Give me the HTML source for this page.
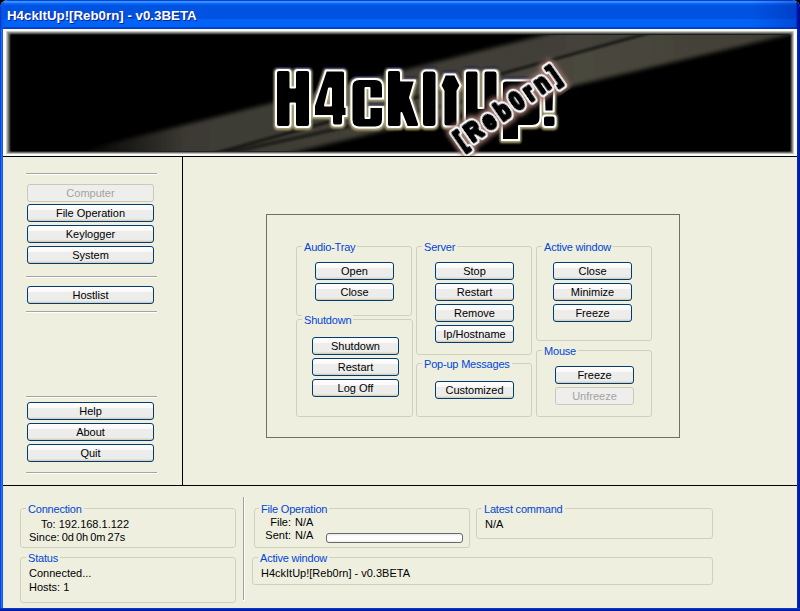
<!DOCTYPE html>
<html><head><meta charset="utf-8"><style>
*{box-sizing:border-box;margin:0;padding:0}
html,body{width:800px;height:611px;overflow:hidden;background:#000}
body{position:relative;font-family:"Liberation Sans",sans-serif;font-size:11px;color:#000}
#win{position:absolute;left:0;top:0;width:800px;height:611px;background:#efefe0;border-radius:8px 8px 0 0;overflow:hidden}
#title{position:absolute;left:0;top:0;width:800px;height:29px;background:linear-gradient(to bottom,#0a3fd0 0px,#0a3fd0 1px,#3d95ff 1px,#2a8aff 3px,#0a6bff 3px,#0060f8 5px,#0053e1 5px,#0053e1 19px,#0062f6 19px,#0062f6 27px,#0049e0 27px,#0038c8 29px)}
#ttext{position:absolute;left:7px;top:8px;font-weight:bold;font-size:13.3px;color:#fff;text-shadow:1px 1px 0 #0a1e8a;white-space:nowrap}
#lb{position:absolute;left:0;top:29px;width:3px;height:582px;background:linear-gradient(to right,#0a2ae0,#2070f0,#0a50e8)}
#rb{position:absolute;left:797px;top:29px;width:3px;height:582px;background:linear-gradient(to right,#0030d0,#0020b0,#001890)}
#bb{position:absolute;left:0;top:608px;width:800px;height:3px;background:linear-gradient(to bottom,#0a40e0,#0022b0,#001890)}
#banner{position:absolute;left:3px;top:29px;width:794px;height:127px;background:#fffcf5}
#bin{position:absolute;left:8px;top:6px;width:779px;height:116px;background:#000;overflow:hidden}
.hl{position:absolute;background:#000}
.sep{position:absolute;left:26px;width:131px;height:2px;border-top:1px solid #a6a5a0;border-bottom:1px solid #fff}
.btn{position:absolute;border:1px solid #003c74;border-radius:3px;background:linear-gradient(to bottom,#fffefe 0px,#fdf8f7 5px,#ededec 5px,#ececeb 14px,#e4e1d4 14px,#e4e1d4 15px,#d6d0bd 15px,#d6d0bd 16px);text-align:center;line-height:15px;padding-top:1px;white-space:nowrap;color:#000}
.btn.dis{border-color:#cac8bb;background:#eeeeec;color:#a2a2a2}
.gb{position:absolute;border:1px solid #d0d0bc;border-radius:3px}
.gl{position:absolute;background:#efefe0;color:#0046d5;padding:0 2px;line-height:13px;white-space:nowrap;letter-spacing:-0.2px}
.t{position:absolute;line-height:13px;white-space:nowrap}
.frame{position:absolute;border:1px solid #716f64}

.prog{position:absolute;border:1px solid #686868;border-radius:3px;background:linear-gradient(to bottom,#e8e8e8,#fff 30%,#fff 70%,#f0f0f0)}
</style></head><body>
<div id="win">
<div id="title"><div style="position:absolute;left:0;top:0;width:800px;height:29px;background:linear-gradient(to right,#0030c8 0px,#0a56e6 2px,rgba(0,80,230,0) 5px,rgba(0,80,230,0) 750px,rgba(0,30,160,0.35) 796px,#0018a8 797px,#000a90 800px)"></div><div id="ttext">H4ckItUp![Reb0rn] - v0.3BETA</div></div>
<div id="banner"><div id="bin"></div></div>
<svg id="bsvg" width="800" height="157" viewBox="0 0 800 157" style="position:absolute;left:0;top:0">
<defs>
<clipPath id="bc"><rect x="11" y="35" width="779" height="116"/></clipPath>
<linearGradient id="gl" x1="6" x2="11" y1="0" y2="0" gradientUnits="userSpaceOnUse"><stop offset="0" stop-color="#e0e2de"/><stop offset="1" stop-color="#000"/></linearGradient>
<linearGradient id="gr" x1="794" x2="790" y1="0" y2="0" gradientUnits="userSpaceOnUse"><stop offset="0" stop-color="#e0e2de"/><stop offset="1" stop-color="#000"/></linearGradient>
<linearGradient id="gt" x1="0" x2="0" y1="31" y2="35" gradientUnits="userSpaceOnUse"><stop offset="0" stop-color="#e0e2de"/><stop offset="1" stop-color="#000"/></linearGradient>
<linearGradient id="gb" x1="0" x2="0" y1="154" y2="151" gradientUnits="userSpaceOnUse"><stop offset="0" stop-color="#e0e2de"/><stop offset="1" stop-color="#000"/></linearGradient>
<linearGradient id="beamA" x1="80" x2="800" y1="0" y2="0" gradientUnits="userSpaceOnUse"><stop offset="0" stop-color="#44423a" stop-opacity="0"/><stop offset="0.15" stop-color="#44423a" stop-opacity="0.9"/><stop offset="0.8" stop-color="#44423a" stop-opacity="1"/><stop offset="1" stop-color="#44423a" stop-opacity="0.9"/></linearGradient>
<linearGradient id="beamB" x1="80" x2="800" y1="0" y2="0" gradientUnits="userSpaceOnUse"><stop offset="0" stop-color="#4a483e" stop-opacity="0"/><stop offset="0.12" stop-color="#4a483e" stop-opacity="0.8"/><stop offset="0.7" stop-color="#4a483e" stop-opacity="1"/><stop offset="1" stop-color="#4a483e" stop-opacity="0.85"/></linearGradient>
<filter id="blur6" x="-20%" y="-50%" width="140%" height="200%"><feGaussianBlur stdDeviation="2"/></filter>
<filter id="blur2" x="-20%" y="-50%" width="140%" height="200%"><feGaussianBlur stdDeviation="1.2"/></filter>
<filter id="glowY" x="-10%" y="-20%" width="120%" height="140%">
<feMorphology operator="dilate" radius="0.8" in="SourceAlpha" result="d"/>
<feGaussianBlur in="d" stdDeviation="0.8" result="b"/>
<feOffset in="b" dy="1.2" result="bo"/>
<feFlood flood-color="#b0a878"/><feComposite in2="bo" operator="in" result="g"/>
<feOffset in="b" dy="-1.5" result="bn"/>
<feFlood flood-color="#000060"/><feComposite in2="bn" operator="in" result="n"/>
<feMerge><feMergeNode in="n"/><feMergeNode in="g"/><feMergeNode in="SourceGraphic"/></feMerge></filter>
<filter id="glowP" x="-20%" y="-20%" width="140%" height="140%">
<feMorphology operator="dilate" radius="2" in="SourceAlpha" result="d"/>
<feGaussianBlur in="d" stdDeviation="2.5" result="b"/>
<feFlood flood-color="#a07870"/><feComposite in2="b" operator="in" result="g"/>
<feMerge><feMergeNode in="g"/><feMergeNode in="SourceGraphic"/></feMerge></filter>
</defs>
<rect x="3" y="29" width="794" height="127" fill="#fdfbf3"/>
<polygon points="6,31 11,35 11,151 6,154" fill="url(#gl)"/>
<polygon points="794,31 790,35 790,151 794,154" fill="url(#gr)"/>
<polygon points="6,31 794,31 790,35 11,35" fill="url(#gt)"/>
<polygon points="6,154 794,154 790,151 11,151" fill="url(#gb)"/>
<g clip-path="url(#bc)">
<rect x="11" y="35" width="779" height="116" fill="#000"/>
<g filter="url(#blur6)">
<polygon points="0,171 800,-29 800,-9 0,213" fill="url(#beamA)"/>
<polygon points="0,213 800,-9 800,32 0,222" fill="url(#beamB)"/>
</g>
<g filter="url(#blur2)">
<line x1="0" y1="213" x2="800" y2="-9" stroke="#000" stroke-width="3" opacity="0.6"/>
<line x1="200" y1="159" x2="520" y2="89" stroke="#000" stroke-width="4" opacity="0.5"/>
</g>
</g>
<g id="logo" filter="url(#glowY)" fill="#000" stroke="#fff" stroke-width="2" stroke-linejoin="round" fill-rule="evenodd">
<path d="M276,73 Q276,70 279,70 L287.5,70 Q290.5,70 290.5,73 L290.5,87.5 L295,87.5 L295,73 Q295,70 298,70 L307,70 Q310,70 310,73 L310,124 Q310,127 307,127 L298,127 Q295,127 295,124 L295,103.5 L290.5,103.5 L290.5,124 Q290.5,127 287.5,127 L279,127 Q276,127 276,124 Z"/>
<path d="M326,70.5 L342.5,70.5 Q345,70.5 345,73 L345,107 L346.5,107 L346.5,116 L343,116 L343,122 Q343,125.5 340,125.5 L335,125.5 Q332,125.5 332,122 L332,116 L314,116 L314,106 Z M329,88.5 L331,88.5 L331,105.5 L325,105.5 Z"/>
<path d="M359.5,79 L375,79 Q383,79 383,87 L383,98.5 L369.5,98.5 L369.5,88 L365.5,88 L365.5,118 L369.5,118 L369.5,107 L383,107 L383,119.5 Q383,127.5 375,127.5 L359.5,127.5 Q351.5,127.5 351.5,119.5 L351.5,87 Q351.5,79 359.5,79 Z"/>
<path d="M389.5,70 L398,70 Q401,70 401,73 L401,80.5 L415,80.5 L410,97.5 L419,124 Q419.5,127 416.5,127 L407,127 L401.5,113 L401.5,124 Q401.5,127 398.5,127 L389.5,127 Q387,127 387,124 L387,73 Q387,70 389.5,70 Z"/>
<rect x="422" y="70.5" width="14.5" height="56.5" rx="4"/>
<path d="M445,74.5 L455,74.5 L460.5,85.5 L457.5,91 L457.5,123 Q457.5,126.5 454,126.5 L447,126.5 Q443.5,126.5 443.5,123 L443.5,91 L440.5,85.5 Z"/>
<path d="M468,70.5 L475.5,70.5 Q478.5,70.5 478.5,73.5 L478.5,108 L483.5,108 L483.5,73.5 Q483.5,70.5 486.5,70.5 L494.5,70.5 Q497.5,70.5 497.5,74 L497.5,118 Q497.5,125.5 490,125.5 L472,125.5 Q465,125.5 465,118 L465,73.5 Q465,70.5 468,70.5 Z"/>
<path d="M506,80.5 L532,80.5 Q540.5,80.5 540.5,89 L540.5,118 Q540.5,126 532,126 L519,126 L519,140 L502,140 L502,84 Q502,80.5 506,80.5 Z"/>
<path d="M546.5,70.5 L551.5,70.5 Q554.5,70.5 554.5,73.5 L553.5,111.5 L544.5,111.5 L543.5,73.5 Q543.5,70.5 546.5,70.5 Z"/>
<rect x="543" y="115.5" width="12.5" height="11.5" rx="3"/>
</g>
<g filter="url(#glowP)" transform="translate(509,106) rotate(-35) scale(0.8,1)">
<text x="0" y="9" text-anchor="middle" font-family="Liberation Sans" font-weight="bold" font-size="26" letter-spacing="6.3" fill="#fff" stroke="#fff" stroke-width="7.5" stroke-linejoin="round">[Reb0rn]</text>
<text x="0" y="9" text-anchor="middle" font-family="Liberation Sans" font-weight="bold" font-size="26" letter-spacing="6.3" fill="#000" stroke="#000" stroke-width="3.6" stroke-linejoin="round">[Reb0rn]</text>
</g>
</svg>

<div class="hl" style="left:3px;top:156px;width:794px;height:1px"></div>
<div class="hl" style="left:182px;top:157px;width:1px;height:328px"></div>
<div class="hl" style="left:3px;top:485px;width:794px;height:1px"></div>
<div class="sep" style="top:173px"></div>
<div class="sep" style="top:276px"></div>
<div class="sep" style="top:311px"></div>
<div class="sep" style="top:396px"></div>
<div class="sep" style="top:472px"></div>
<div class="btn dis" style="left:27px;top:184px;width:127px;height:18px"><span>Computer</span></div>
<div class="btn" style="left:27px;top:204px;width:127px;height:18px"><span>File Operation</span></div>
<div class="btn" style="left:27px;top:225px;width:127px;height:18px"><span>Keylogger</span></div>
<div class="btn" style="left:27px;top:246px;width:127px;height:18px"><span>System</span></div>
<div class="btn" style="left:27px;top:286px;width:127px;height:18px"><span>Hostlist</span></div>
<div class="btn" style="left:27px;top:402px;width:127px;height:18px"><span>Help</span></div>
<div class="btn" style="left:27px;top:423px;width:127px;height:18px"><span>About</span></div>
<div class="btn" style="left:27px;top:444px;width:127px;height:18px"><span>Quit</span></div>
<div class="frame" style="left:266px;top:214px;width:414px;height:224px"></div>
<div class="gb" style="left:296px;top:246px;width:116px;height:70px"></div><div class="gl" style="left:302px;top:241px">Audio-Tray</div>
<div class="gb" style="left:296px;top:319px;width:117px;height:98px"></div><div class="gl" style="left:302px;top:314px">Shutdown</div>
<div class="gb" style="left:416px;top:246px;width:116px;height:109px"></div><div class="gl" style="left:422px;top:241px">Server</div>
<div class="gb" style="left:416px;top:363px;width:116px;height:54px"></div><div class="gl" style="left:422px;top:358px">Pop-up Messages</div>
<div class="gb" style="left:536px;top:246px;width:116px;height:95px"></div><div class="gl" style="left:542px;top:241px">Active window</div>
<div class="gb" style="left:536px;top:350px;width:116px;height:67px"></div><div class="gl" style="left:542px;top:345px">Mouse</div>
<div class="btn" style="left:315px;top:262px;width:79px;height:18px"><span>Open</span></div>
<div class="btn" style="left:315px;top:283px;width:79px;height:18px"><span>Close</span></div>
<div class="btn" style="left:435px;top:262px;width:79px;height:18px"><span>Stop</span></div>
<div class="btn" style="left:435px;top:283px;width:79px;height:18px"><span>Restart</span></div>
<div class="btn" style="left:435px;top:304px;width:79px;height:18px"><span>Remove</span></div>
<div class="btn" style="left:435px;top:325px;width:79px;height:18px"><span>Ip/Hostname</span></div>
<div class="btn" style="left:435px;top:381px;width:79px;height:18px"><span>Customized</span></div>
<div class="btn" style="left:553px;top:262px;width:79px;height:18px"><span>Close</span></div>
<div class="btn" style="left:553px;top:283px;width:79px;height:18px"><span>Minimize</span></div>
<div class="btn" style="left:553px;top:304px;width:79px;height:18px"><span>Freeze</span></div>
<div class="btn" style="left:312px;top:337px;width:87px;height:18px"><span>Shutdown</span></div>
<div class="btn" style="left:312px;top:358px;width:87px;height:18px"><span>Restart</span></div>
<div class="btn" style="left:312px;top:379px;width:87px;height:18px"><span>Log Off</span></div>
<div class="btn" style="left:555px;top:366px;width:79px;height:18px"><span>Freeze</span></div>
<div class="btn dis" style="left:555px;top:387px;width:79px;height:18px"><span>Unfreeze</span></div>
<div class="gb" style="left:20px;top:508px;width:216px;height:40px"></div><div class="gl" style="left:26px;top:503px">Connection</div>
<div class="t" style="left:41px;top:518px;">To: 192.168.1.122</div>
<div class="t" style="left:29px;top:531px;word-spacing:-1px">Since: 0d 0h 0m 27s</div>
<div class="gb" style="left:20px;top:557px;width:216px;height:46px"></div><div class="gl" style="left:26px;top:552px">Status</div>
<div class="t" style="left:29px;top:567px;">Connected...</div>
<div class="t" style="left:29px;top:581px;">Hosts: 1</div>
<div style="position:absolute;left:243px;top:497px;width:2px;height:104px;background:#a0a0a0;border-right:1px solid #fff;border-bottom:1px solid #fff"></div>
<div class="gb" style="left:254px;top:508px;width:216px;height:40px"></div><div class="gl" style="left:259px;top:503px">File Operation</div>
<div class="t" style="left:249px;top:516px;width:42px;text-align:right">File:</div>
<div class="t" style="left:249px;top:529px;width:42px;text-align:right">Sent:</div>
<div class="t" style="left:295px;top:516px;">N/A</div>
<div class="t" style="left:295px;top:529px;">N/A</div>
<div class="prog" style="left:326px;top:533px;width:137px;height:10px"></div>
<div class="gb" style="left:476px;top:508px;width:237px;height:31px"></div><div class="gl" style="left:482px;top:503px">Latest command</div>
<div class="t" style="left:485px;top:518px;">N/A</div>
<div class="gb" style="left:252px;top:557px;width:461px;height:28px"></div><div class="gl" style="left:258px;top:552px">Active window</div>
<div class="t" style="left:261px;top:567px;">H4ckItUp![Reb0rn] - v0.3BETA</div>

<div id="lb"></div><div id="rb"></div><div id="bb"></div>
</div>
</body></html>
